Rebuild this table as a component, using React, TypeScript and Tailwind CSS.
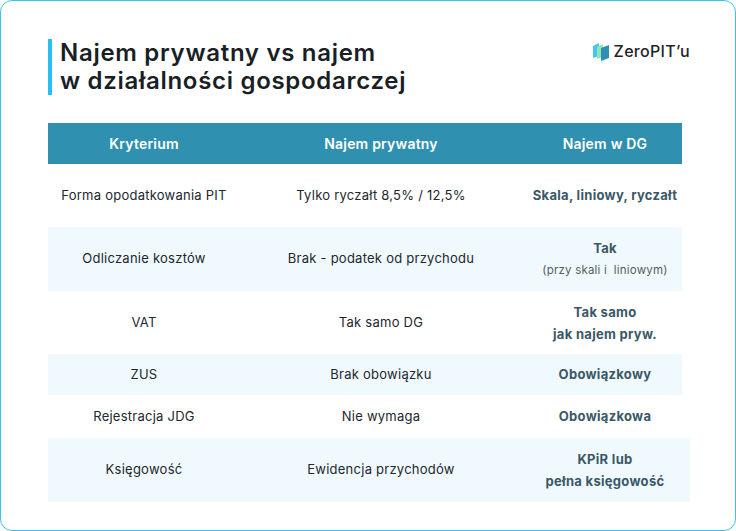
import React from "react";

type Row = {
  a: string;
  b: string;
  c: React.ReactNode;
  shade: boolean;
  h: string;
  wide?: boolean;
};

const rows: Row[] = [
  { a: "Forma opodatkowania PIT", b: "Tylko ryczałt 8,5% / 12,5%", c: <span>Skala, liniowy, ryczałt</span>, shade: false, h: "h-[63px]" },
  {
    a: "Odliczanie kosztów",
    b: "Brak - podatek od przychodu",
    c: (
      <div className="flex flex-col items-center gap-[4px]">
        <span>Tak</span>
        <span className="text-[11.5px] font-normal tracking-[0.2px] text-[#555c63]">(przy skali i&nbsp; liniowym)</span>
      </div>
    ),
    shade: true,
    h: "h-[64px]",
  },
  {
    a: "VAT",
    b: "Tak samo DG",
    c: (
      <div className="flex flex-col items-center leading-[22px]">
        <span>Tak samo</span>
        <span>jak najem pryw.</span>
      </div>
    ),
    shade: false,
    h: "h-[63px]",
  },
  { a: "ZUS", b: "Brak obowiązku", c: <span>Obowiązkowy</span>, shade: true, h: "h-[41px]" },
  { a: "Rejestracja JDG", b: "Nie wymaga", c: <span>Obowiązkowa</span>, shade: false, h: "h-[43px]" },
  {
    a: "Księgowość",
    b: "Ewidencja przychodów",
    c: (
      <div className="flex flex-col items-center leading-[22px]">
        <span>KPiR lub</span>
        <span>pełna księgowość</span>
      </div>
    ),
    shade: true,
    h: "h-[64px]",
    wide: true,
  },
];

function Logo() {
  return (
    <div className="flex items-center gap-[3px]">
      <svg width="19" height="20" viewBox="0 0 19 20">
        <polygon points="1,5 7,2 7,15 1,17" fill="#45c6f2" />
        <polygon points="5,6 11,3 11,16 5,18" fill="#93e2b6" />
        <polygon points="9,7 17,4 17,17 9,20" fill="#2b90b3" />
      </svg>
      <span className="text-[16px] font-medium tracking-[0.3px] text-[#1f2329]">ZeroPIT’u</span>
    </div>
  );
}

export default function App() {
  return (
    <div
      className="h-[531px] w-[736px] overflow-hidden bg-white"
      style={{ fontFamily: "Inter, 'Noto Sans', sans-serif" }}
    >
      <div className="h-full w-full rounded-[12px] border-[1.5px] border-[#3cc3f2] bg-white">
        <div className="flex items-start justify-between pl-[47px] pr-[45px] pt-[38px]">
          <div className="flex">
            <div className="w-[4px] self-stretch bg-[#29bdf5]" />
            <h1 className="ml-[8px] text-[24px] font-semibold leading-[28px] tracking-[0.7px] text-[#1a1f26]">
              Najem prywatny vs najem
              <br />
              w działalności gospodarczej
            </h1>
          </div>
          <div className="pt-[0px]">
            <Logo />
          </div>
        </div>

        <div className="ml-[47px] mt-[28px] w-[634px]">
          <div className="flex h-[41px] items-center bg-[#2f90b0] text-[14px] font-semibold tracking-[0.2px] text-white">
            <div className="w-[192px] text-center">Kryterium</div>
            <div className="w-[282px] text-center">Najem prywatny</div>
            <div className="flex-1 pl-[6px] text-center">Najem w DG</div>
          </div>
          {rows.map((r, i) => (
            <div
              key={i}
              className={`flex items-center text-[13px] tracking-[0.25px] text-[#22272d] ${r.h} ${r.shade ? "bg-[#f0f9fe]" : ""} ${r.wide ? "mr-[-8px]" : ""}`}
            >
              <div className="w-[192px] text-center">{r.a}</div>
              <div className="w-[282px] text-center">{r.b}</div>
              <div className={`flex flex-1 justify-center font-bold tracking-[0.3px] text-[#3b5866] ${r.wide ? "pr-[2px]" : "pl-[6px]"}`}>
                {r.c}
              </div>
            </div>
          ))}
        </div>
      </div>
    </div>
  );
}
